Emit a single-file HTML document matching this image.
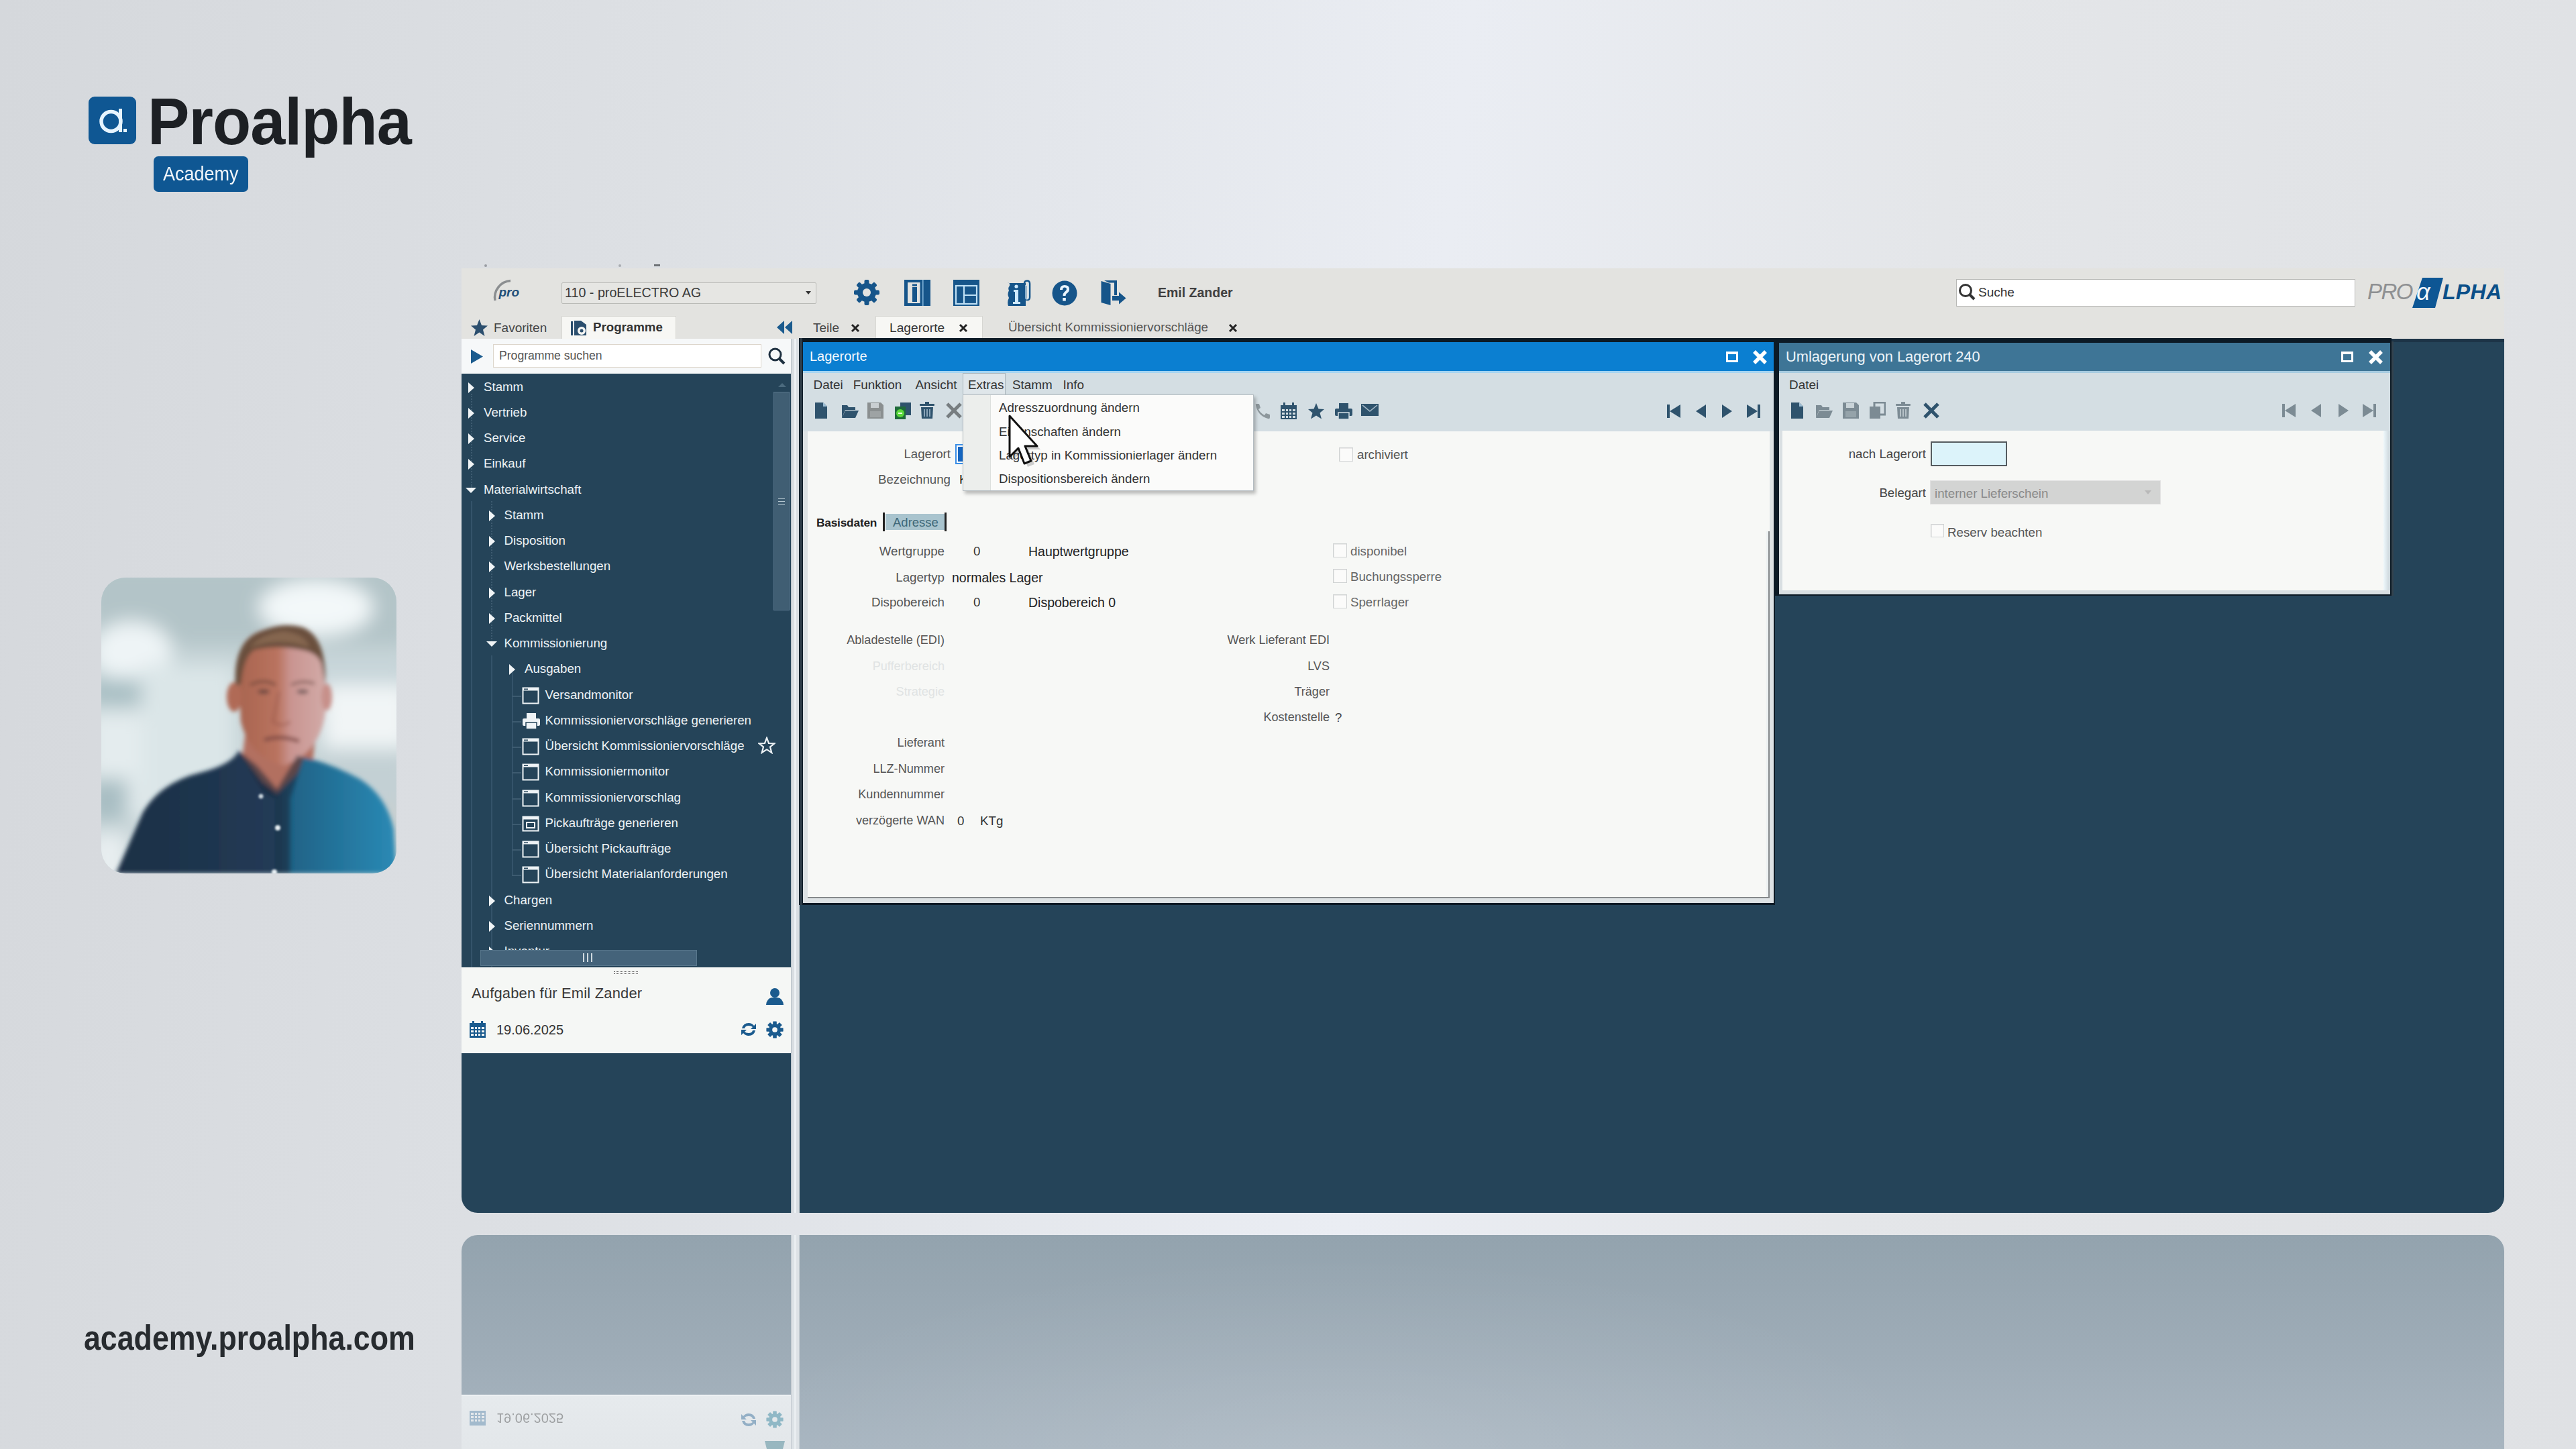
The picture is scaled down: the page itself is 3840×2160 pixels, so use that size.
<!DOCTYPE html>
<html><head><meta charset="utf-8">
<style>
*{box-sizing:border-box;margin:0;padding:0}
html,body{width:3840px;height:2160px;overflow:hidden}
body{position:relative;font-family:"Liberation Sans",sans-serif;
background:linear-gradient(96deg,#d5d8dc 0%,#dde0e4 25%,#eaedf3 54%,#e4e6e9 72%,#dfe1e4 100%);}
.a{position:absolute}
.t{position:absolute;white-space:nowrap;line-height:1}
.app{font-size:19px;color:#2b2b2b}
</style></head><body>

<!-- Brand logo -->
<div class="a" style="left:132px;top:144px;width:71px;height:71px;background:#0f5793;border-radius:9px"></div>
<svg class="a" style="left:132px;top:144px" width="71" height="71" viewBox="0 0 71 71">
<circle cx="33.5" cy="37" r="14.5" fill="none" stroke="#e6f4ff" stroke-width="5.5"/>
<rect x="45" y="18" width="5" height="35" fill="#e6f4ff"/>
<rect x="52" y="48" width="5" height="5" fill="#e6f4ff"/>
</svg>
<div class="t" style="left:220px;top:132px;font-size:98px;font-weight:bold;color:#1d2024;transform:scaleX(0.955);transform-origin:0 0;letter-spacing:-1px">Proalpha</div>
<div class="a" style="left:229px;top:233px;width:141px;height:53px;background:#0f5793;border-radius:7px"></div>
<div class="t" style="left:243px;top:244px;font-size:30px;color:#f2f6fa;transform:scaleX(0.9);transform-origin:0 0">Academy</div>

<!-- Presenter video -->
<svg class="a" style="left:151px;top:861px" width="440" height="441" viewBox="0 0 440 441">
<defs>
<clipPath id="vc"><rect x="0" y="0" width="440" height="441" rx="36" ry="36"/></clipPath>
<filter id="bl1" x="-30%" y="-30%" width="160%" height="160%"><feGaussianBlur stdDeviation="14"/></filter>
<filter id="bl2" x="-10%" y="-10%" width="120%" height="120%"><feGaussianBlur stdDeviation="3"/></filter>
<filter id="bl3" x="-10%" y="-10%" width="120%" height="120%"><feGaussianBlur stdDeviation="1.5"/></filter>
<linearGradient id="skin" x1="0" x2="1" y1="0" y2="0"><stop offset="0" stop-color="#a8644f"/><stop offset="0.45" stop-color="#b9735f"/><stop offset="0.6" stop-color="#c99490"/><stop offset="1" stop-color="#d2aba8"/></linearGradient>
<linearGradient id="shirt" x1="0" x2="1" y1="0" y2="0"><stop offset="0" stop-color="#1d2f45"/><stop offset="0.55" stop-color="#213a55"/><stop offset="0.62" stop-color="#1f6286"/><stop offset="1" stop-color="#2a8ab5"/></linearGradient>
</defs>
<g clip-path="url(#vc)">
<rect x="0" y="0" width="440" height="441" fill="#c5d3d6"/>
<g filter="url(#bl1)">
<rect x="-20" y="-20" width="480" height="120" fill="#b3c4c8"/>
<ellipse cx="320" cy="45" rx="85" ry="42" fill="#f3f8f9"/>
<ellipse cx="45" cy="110" rx="60" ry="45" fill="#eef4f6"/>
<rect x="-20" y="150" width="90" height="40" fill="#a9bfc4"/>
<rect x="60" y="130" width="140" height="230" fill="#dbe6e8"/>
<rect x="-20" y="200" width="80" height="160" fill="#e4ecee"/>
<rect x="-20" y="300" width="60" height="60" fill="#a8bec3"/>
<rect x="300" y="120" width="160" height="90" fill="#c8d6da"/>
<rect x="330" y="160" width="130" height="95" fill="#f1f5f6"/>
<rect x="330" y="265" width="130" height="80" fill="#c3d0d4"/>
<rect x="360" y="340" width="100" height="80" fill="#c9d0d0"/>
<rect x="-20" y="380" width="60" height="80" fill="#e8eef0"/>
</g>
<g filter="url(#bl2)">
<!-- neck -->
<path d="M215 230 L320 230 L315 275 L262 330 L210 270 Z" fill="#b27060"/>
<!-- face -->
<path d="M204 125 Q208 78 265 74 Q325 76 332 125 L334 200 Q326 262 272 280 Q222 270 208 215 Z" fill="url(#skin)"/>
<!-- ears -->
<ellipse cx="198" cy="178" rx="11" ry="22" fill="#b06a56"/>
<ellipse cx="336" cy="178" rx="8" ry="20" fill="#c7908a"/>
<!-- shirt -->
<path d="M22 441 L62 350 Q88 305 150 290 Q195 278 205 258 L240 305 L262 322 L292 292 L302 268 Q340 276 385 300 Q425 325 436 375 L440 441 Z" fill="url(#shirt)"/>
<path d="M205 258 L240 318 L258 330 L258 441 L282 441 L282 330 L302 268 L292 265 L262 315 L232 280 Z" fill="#172638" opacity="0.55"/>
<!-- hair -->
<path d="M200 160 Q196 95 238 80 Q270 66 300 74 Q336 88 334 160 L328 128 Q322 112 300 108 Q262 100 228 108 Q212 118 208 160 Z" fill="#6b4f3d"/>
<path d="M222 104 Q265 88 310 104 Q305 84 272 80 Q238 84 222 104 Z" fill="#85664f"/>
<!-- brows/eyes -->
<path d="M222 160 Q242 150 260 160" stroke="#7a4d40" stroke-width="4" fill="none"/>
<path d="M283 160 Q300 152 318 158" stroke="#8a6560" stroke-width="4" fill="none"/>
<ellipse cx="242" cy="170" rx="9" ry="3.5" fill="#6d4a42"/>
<ellipse cx="300" cy="170" rx="9" ry="3.5" fill="#7a6060"/>
<!-- nose/mouth -->
<path d="M265 170 L256 215 Q268 224 282 215" stroke="#94564a" stroke-width="3" fill="none" opacity="0.7"/>
<path d="M243 242 Q268 234 295 244" stroke="#7e4a44" stroke-width="5" fill="none"/>
</g>
<g filter="url(#bl3)">
<circle cx="263" cy="373" r="4" fill="#e8f0f4"/>
<circle cx="258" cy="439" r="4" fill="#e8f0f4"/>
<circle cx="238" cy="326" r="3.5" fill="#c9d5dc"/>
</g>
</g>
</svg>


<!-- URL -->
<div class="t" style="left:125px;top:1968px;font-size:52px;font-weight:bold;color:#272b2f;transform:scaleX(0.86);transform-origin:0 0">academy.proalpha.com</div>

<!-- APP -->
<div class="a" id="app" style="left:688px;top:400px;width:3045px;height:1408px;background:#254459;border-radius:0 0 24px 24px;overflow:hidden"></div>
<div class="app">
<!-- top bar -->
<div class="a" style="left:688px;top:400px;width:3045px;height:105px;background:#e3e3e0"></div>
<div class="a" style="left:722px;top:394px;width:4px;height:4px;background:#9a9ea3;border-radius:2px"></div><div class="a" style="left:922px;top:394px;width:4px;height:4px;background:#a9adb2;border-radius:2px"></div><div class="a" style="left:975px;top:394px;width:9px;height:3px;background:#6e7276"></div>
<!-- pro logo -->
<svg class="a" style="left:730px;top:414px" width="56" height="38" viewBox="0 0 56 38">
<path d="M8 34 A25 25 0 0 1 31 4.5" fill="none" stroke="#8b8e90" stroke-width="3.5"/>
<text x="13.5" y="28" font-family="Liberation Sans" font-style="italic" font-weight="bold" font-size="19" fill="#22507a">pro</text>
</svg>
<!-- company dropdown -->
<div class="a" style="left:837px;top:421px;width:380px;height:32px;border:1px solid #b9bab6;background:#e6e6e3;border-radius:2px"></div>
<div class="t" style="left:842px;top:427px;font-size:19.7px;color:#3a3a3a">110 - proELECTRO AG</div>
<svg class="a" style="left:1200px;top:432px" width="10" height="8"><path d="M1 2 L9 2 L5 7 Z" fill="#333"/></svg>
<!-- top icons -->
<svg class="a" style="left:1272px;top:416px" width="40" height="40" viewBox="0 0 40 40"><g fill="#16558a"><circle cx="20" cy="20" r="14"/><rect x="16.5" y="1" width="7" height="9" rx="2" transform="rotate(0 20 20)"/><rect x="16.5" y="1" width="7" height="9" rx="2" transform="rotate(45 20 20)"/><rect x="16.5" y="1" width="7" height="9" rx="2" transform="rotate(90 20 20)"/><rect x="16.5" y="1" width="7" height="9" rx="2" transform="rotate(135 20 20)"/><rect x="16.5" y="1" width="7" height="9" rx="2" transform="rotate(180 20 20)"/><rect x="16.5" y="1" width="7" height="9" rx="2" transform="rotate(225 20 20)"/><rect x="16.5" y="1" width="7" height="9" rx="2" transform="rotate(270 20 20)"/><rect x="16.5" y="1" width="7" height="9" rx="2" transform="rotate(315 20 20)"/></g><circle cx="20" cy="20" r="6" fill="#e3e3e0"/></svg>
<svg class="a" style="left:1348px;top:417px" width="39" height="39" viewBox="0 0 39 39">
<rect x="0" y="0" width="39" height="39" fill="#16558a"/><rect x="5" y="4" width="18.5" height="31" fill="#e3e3e0"/><rect x="12" y="11" width="7" height="22" fill="#16558a"/><rect x="12" y="6.5" width="7" height="3" fill="#16558a"/><rect x="27" y="0" width="1.6" height="39" fill="#7fb2d8"/></svg>
<svg class="a" style="left:1421px;top:417px" width="39" height="39" viewBox="0 0 39 39">
<rect x="0" y="0" width="39" height="39" fill="#16558a"/><g fill="none" stroke="#bfe0f5" stroke-width="2.2"><rect x="4" y="9" width="31" height="27"/><path d="M16 9 L16 36 M16 23 L35 23"/></g></svg>
<svg class="a" style="left:1500px;top:417px" width="37" height="40" viewBox="0 0 37 40">
<path d="M2 5 Q6 4 5 9 Q2 12 4 16 Q1 22 4 27 Q1 33 3 39 L29 39 L29 5 Z" fill="#16558a"/><circle cx="15" cy="10" r="2.6" fill="#cfeaff"/><path d="M11 15 L18 15 L18 33 L21 33 L21 36 L10 36 L10 33 L13 33 L13 18 L11 18 Z" fill="#cfeaff"/>
<path d="M27 29 L27 6 Q27 1.5 31 1.5 Q35 1.5 35 6 L35 26 Q35 30 31.5 30 Q29 30 29 27 L29 9" fill="none" stroke="#16558a" stroke-width="2.6"/><path d="M29 8 L29 27 Q29 29 31 29 Q33 29 33 26 L33 6 Q33 3.5 31 3.5" fill="none" stroke="#d6ecfb" stroke-width="1.2"/></svg>
<svg class="a" style="left:1568px;top:418px" width="38" height="38" viewBox="0 0 38 38">
<circle cx="19" cy="19" r="18.5" fill="#16558a"/><path d="M12 14 Q12 7 19 7 Q26 7 26 13 Q26 17 22 19.5 Q20.5 20.5 20.5 23 L16.5 23 Q16.5 19 19 17 Q22 15 22 13 Q22 10.5 19 10.5 Q16 10.5 16 14 Z" fill="#eaf6ff"/><rect x="16.2" y="26" width="4.6" height="4.6" fill="#eaf6ff"/></svg>
<svg class="a" style="left:1640px;top:416px" width="40" height="40" viewBox="0 0 40 40">
<path d="M1.5 3 L15.5 7 L15.5 39 L1.5 35 Z" fill="#16558a"/><path d="M6 2 L25 2 L25 24 L21 24 L21 5.5 L13 5.5 Z" fill="#16558a"/>
<path d="M18 25 L28 25 L28 19.5 L38.5 28.5 L28 37.5 L28 32 L18 32 Z" fill="#16558a"/></svg>
<div class="t" style="left:1726px;top:427px;font-size:19.5px;font-weight:bold;color:#404040">Emil Zander</div>
<!-- search right -->
<div class="a" style="left:2916px;top:416px;width:595px;height:41px;background:#fff;border:1px solid #b8b9b6"></div>
<svg class="a" style="left:2918px;top:421px" width="30" height="30" viewBox="0 0 30 30"><circle cx="12" cy="12" r="8.5" fill="none" stroke="#333" stroke-width="3"/><path d="M18 18 L25 25" stroke="#333" stroke-width="4"/></svg>
<div class="t" style="left:2949px;top:426px;font-size:19px;color:#333">Suche</div>
<!-- PROALPHA logo -->
<svg class="a" style="left:3525px;top:410px" width="210" height="52" viewBox="0 0 210 52">
<text x="4" y="36" font-family="Liberation Sans" font-style="italic" font-size="33" fill="#8e9092" letter-spacing="-1.5">PRO</text>
<polygon points="86,4 117,4 105,49 71,49" fill="#0d5694"/>
<text x="77" y="37" font-family="Liberation Sans" font-style="italic" font-size="36" fill="#f4f8fb">α</text>
<text x="116" y="36" font-family="Liberation Sans" font-style="italic" font-weight="bold" font-size="32" fill="#0b4f88" letter-spacing="0.3">LPHA</text>
</svg>
<!-- tab row -->
<svg class="a" style="left:701px;top:475px" width="27" height="27" viewBox="0 0 27 27"><path d="M13.5 1 L17 10 L26 10.5 L19 16.5 L21.5 26 L13.5 20.5 L5.5 26 L8 16.5 L1 10.5 L10 10 Z" fill="#2c4f6e"/></svg>
<div class="t" style="left:736px;top:479px;font-size:19px;color:#444">Favoriten</div>
<div class="a" style="left:837px;top:471px;width:171px;height:38px;background:#f7f7f4;border:1px solid #d6d6d2;border-bottom:none"></div>
<svg class="a" style="left:850px;top:476px" width="28" height="26" viewBox="0 0 28 26"><rect x="1" y="3" width="3" height="21" fill="#2c4f6e"/><path d="M6 2 L16 2 L24 8 L24 24 L6 24 Z" fill="#2c4f6e"/><circle cx="17" cy="17" r="6" fill="#f7f7f4"/><circle cx="17" cy="17" r="2.5" fill="#2c4f6e"/></svg>
<div class="t" style="left:884px;top:479px;font-size:18.7px;font-weight:bold;color:#333">Programme</div>
<svg class="a" style="left:1157px;top:477px" width="25" height="22" viewBox="0 0 25 22"><path d="M12 1 L1 11 L12 21 Z M24 1 L13 11 L24 21 Z" fill="#1b5b8e"/></svg>
<div class="t" style="left:1212px;top:479px;font-size:19px;color:#444">Teile</div>
<svg class="a" style="left:1268px;top:482px" width="14" height="14" viewBox="0 0 14 14"><path d="M2 2 L12 12 M12 2 L2 12" stroke="#222" stroke-width="3"/></svg>
<div class="a" style="left:1305px;top:471px;width:160px;height:38px;background:#f7f7f4;border:1px solid #d6d6d2;border-bottom:none"></div>
<div class="t" style="left:1326px;top:479px;font-size:19.2px;color:#333">Lagerorte</div>
<svg class="a" style="left:1429px;top:482px" width="14" height="14" viewBox="0 0 14 14"><path d="M2 2 L12 12 M12 2 L2 12" stroke="#222" stroke-width="3"/></svg>
<div class="t" style="left:1503px;top:479px;font-size:18.75px;color:#555">Übersicht Kommissioniervorschläge</div>
<svg class="a" style="left:1831px;top:482px" width="14" height="14" viewBox="0 0 14 14"><path d="M2 2 L12 12 M12 2 L2 12" stroke="#222" stroke-width="3"/></svg>

<!-- left panel search -->
<div class="a" style="left:688px;top:505px;width:491px;height:52px;background:#f6f8f9"></div>
<svg class="a" style="left:701px;top:520px" width="20" height="23" viewBox="0 0 20 23"><path d="M1 1 L19 11.5 L1 22 Z" fill="#1b5b8e"/></svg>
<div class="a" style="left:735px;top:513px;width:400px;height:35px;background:#fff;border:1px solid #ddd6cc"></div>
<div class="t" style="left:744px;top:522px;font-size:17.6px;color:#555">Programme suchen</div>
<svg class="a" style="left:1144px;top:517px" width="28" height="28" viewBox="0 0 28 28"><circle cx="11.5" cy="11.5" r="8.5" fill="none" stroke="#1d2f3f" stroke-width="3"/><path d="M18 18 L25 25" stroke="#1d2f3f" stroke-width="4"/></svg>

<!-- tree -->
<div class="a" style="left:688px;top:557px;width:491px;height:885px;background:#254459;overflow:hidden">
<div class="a" style="left:14px;top:30px;width:1px;height:140px;border-left:2px dotted #3d5b70"></div>
<div class="a" style="left:14px;top:190px;width:1px;height:700px;border-left:2px solid #34536a"></div>
<div class="a" style="left:44px;top:190px;width:1px;height:210px;border-left:2px dotted #3d5b70"></div>
<div class="a" style="left:44px;top:420px;width:1px;height:470px;border-left:2px solid #34536a"></div>
<div class="a" style="left:75px;top:440px;width:1px;height:308px;border-left:2px solid #34536a"></div>
<svg class="a" style="left:8.0px;top:10.6px" width="14" height="20" viewBox="0 0 14 20"><path d="M2 2 L11 10 L2 18 Z" fill="#f0f4f6"/></svg>
<div class="t" style="left:33.0px;top:10.6px;font-size:18.7px;color:#eef3f6">Stamm</div>
<svg class="a" style="left:8.0px;top:48.9px" width="14" height="20" viewBox="0 0 14 20"><path d="M2 2 L11 10 L2 18 Z" fill="#f0f4f6"/></svg>
<div class="t" style="left:33.0px;top:48.9px;font-size:18.7px;color:#eef3f6">Vertrieb</div>
<svg class="a" style="left:8.0px;top:87.1px" width="14" height="20" viewBox="0 0 14 20"><path d="M2 2 L11 10 L2 18 Z" fill="#f0f4f6"/></svg>
<div class="t" style="left:33.0px;top:87.1px;font-size:18.7px;color:#eef3f6">Service</div>
<svg class="a" style="left:8.0px;top:125.4px" width="14" height="20" viewBox="0 0 14 20"><path d="M2 2 L11 10 L2 18 Z" fill="#f0f4f6"/></svg>
<div class="t" style="left:33.0px;top:125.4px;font-size:18.7px;color:#eef3f6">Einkauf</div>
<svg class="a" style="left:4.0px;top:166.6px" width="20" height="14" viewBox="0 0 20 14"><path d="M2 3 L18 3 L10 11 Z" fill="#f0f4f6"/></svg>
<div class="t" style="left:33.0px;top:163.6px;font-size:18.7px;color:#eef3f6">Materialwirtschaft</div>
<svg class="a" style="left:38.5px;top:201.9px" width="14" height="20" viewBox="0 0 14 20"><path d="M2 2 L11 10 L2 18 Z" fill="#f0f4f6"/></svg>
<div class="t" style="left:63.5px;top:201.9px;font-size:18.7px;color:#eef3f6">Stamm</div>
<svg class="a" style="left:38.5px;top:240.1px" width="14" height="20" viewBox="0 0 14 20"><path d="M2 2 L11 10 L2 18 Z" fill="#f0f4f6"/></svg>
<div class="t" style="left:63.5px;top:240.1px;font-size:18.7px;color:#eef3f6">Disposition</div>
<svg class="a" style="left:38.5px;top:278.4px" width="14" height="20" viewBox="0 0 14 20"><path d="M2 2 L11 10 L2 18 Z" fill="#f0f4f6"/></svg>
<div class="t" style="left:63.5px;top:278.4px;font-size:18.7px;color:#eef3f6">Werksbestellungen</div>
<svg class="a" style="left:38.5px;top:316.6px" width="14" height="20" viewBox="0 0 14 20"><path d="M2 2 L11 10 L2 18 Z" fill="#f0f4f6"/></svg>
<div class="t" style="left:63.5px;top:316.6px;font-size:18.7px;color:#eef3f6">Lager</div>
<svg class="a" style="left:38.5px;top:354.9px" width="14" height="20" viewBox="0 0 14 20"><path d="M2 2 L11 10 L2 18 Z" fill="#f0f4f6"/></svg>
<div class="t" style="left:63.5px;top:354.9px;font-size:18.7px;color:#eef3f6">Packmittel</div>
<svg class="a" style="left:34.5px;top:396.1px" width="20" height="14" viewBox="0 0 20 14"><path d="M2 3 L18 3 L10 11 Z" fill="#f0f4f6"/></svg>
<div class="t" style="left:63.5px;top:393.1px;font-size:18.7px;color:#eef3f6">Kommissionierung</div>
<svg class="a" style="left:69.0px;top:431.4px" width="14" height="20" viewBox="0 0 14 20"><path d="M2 2 L11 10 L2 18 Z" fill="#f0f4f6"/></svg>
<div class="t" style="left:94.0px;top:431.4px;font-size:18.7px;color:#eef3f6">Ausgaben</div>
<svg class="a" style="left:90.0px;top:466.6px" width="26" height="26" viewBox="0 0 26 26"><rect x="1.5" y="1.5" width="23" height="23" fill="none" stroke="#eef3f6" stroke-width="2"/><rect x="1.5" y="1.5" width="23" height="4" fill="#eef3f6"/><rect x="3" y="2.5" width="6" height="1.5" fill="#254459"/></svg>
<div class="a" style="left:75px;top:479.6px;width:14px;border-top:2px solid #3d5b70"></div>
<div class="t" style="left:124.5px;top:469.6px;font-size:18.7px;color:#eef3f6">Versandmonitor</div>
<svg class="a" style="left:90.0px;top:504.8px" width="28" height="26" viewBox="0 0 28 26"><rect x="7" y="1" width="14" height="8" fill="#eef3f6"/><rect x="1" y="9" width="26" height="11" rx="2" fill="#eef3f6"/><rect x="6" y="15" width="16" height="10" fill="#eef3f6" stroke="#254459" stroke-width="1.5"/></svg>
<div class="a" style="left:75px;top:517.8px;width:14px;border-top:2px solid #3d5b70"></div>
<div class="t" style="left:124.5px;top:507.8px;font-size:18.7px;color:#eef3f6">Kommissioniervorschläge generieren</div>
<svg class="a" style="left:90.0px;top:543.1px" width="26" height="26" viewBox="0 0 26 26"><rect x="1.5" y="1.5" width="23" height="23" fill="none" stroke="#eef3f6" stroke-width="2"/><rect x="1.5" y="1.5" width="23" height="4" fill="#eef3f6"/><rect x="3" y="2.5" width="6" height="1.5" fill="#254459"/></svg>
<div class="a" style="left:75px;top:556.1px;width:14px;border-top:2px solid #3d5b70"></div>
<div class="t" style="left:124.5px;top:546.1px;font-size:18.7px;color:#eef3f6">Übersicht Kommissioniervorschläge</div>
<svg class="a" style="left:90.0px;top:581.3px" width="26" height="26" viewBox="0 0 26 26"><rect x="1.5" y="1.5" width="23" height="23" fill="none" stroke="#eef3f6" stroke-width="2"/><rect x="1.5" y="1.5" width="23" height="4" fill="#eef3f6"/><rect x="3" y="2.5" width="6" height="1.5" fill="#254459"/></svg>
<div class="a" style="left:75px;top:594.3px;width:14px;border-top:2px solid #3d5b70"></div>
<div class="t" style="left:124.5px;top:584.3px;font-size:18.7px;color:#eef3f6">Kommissioniermonitor</div>
<svg class="a" style="left:90.0px;top:619.6px" width="26" height="26" viewBox="0 0 26 26"><rect x="1.5" y="1.5" width="23" height="23" fill="none" stroke="#eef3f6" stroke-width="2"/><rect x="1.5" y="1.5" width="23" height="4" fill="#eef3f6"/><rect x="3" y="2.5" width="6" height="1.5" fill="#254459"/></svg>
<div class="a" style="left:75px;top:632.6px;width:14px;border-top:2px solid #3d5b70"></div>
<div class="t" style="left:124.5px;top:622.6px;font-size:18.7px;color:#eef3f6">Kommissioniervorschlag</div>
<svg class="a" style="left:90.0px;top:657.8px" width="26" height="26" viewBox="0 0 26 26"><rect x="1.5" y="2.5" width="23" height="21" fill="none" stroke="#eef3f6" stroke-width="2"/><rect x="1.5" y="2.5" width="23" height="4" fill="#eef3f6"/><rect x="7" y="11" width="12" height="8" fill="none" stroke="#eef3f6" stroke-width="2"/></svg>
<div class="a" style="left:75px;top:670.8px;width:14px;border-top:2px solid #3d5b70"></div>
<div class="t" style="left:124.5px;top:660.8px;font-size:18.7px;color:#eef3f6">Pickaufträge generieren</div>
<svg class="a" style="left:90.0px;top:696.1px" width="26" height="26" viewBox="0 0 26 26"><rect x="1.5" y="1.5" width="23" height="23" fill="none" stroke="#eef3f6" stroke-width="2"/><rect x="1.5" y="1.5" width="23" height="4" fill="#eef3f6"/><rect x="3" y="2.5" width="6" height="1.5" fill="#254459"/></svg>
<div class="a" style="left:75px;top:709.1px;width:14px;border-top:2px solid #3d5b70"></div>
<div class="t" style="left:124.5px;top:699.1px;font-size:18.7px;color:#eef3f6">Übersicht Pickaufträge</div>
<svg class="a" style="left:90.0px;top:734.3px" width="26" height="26" viewBox="0 0 26 26"><rect x="1.5" y="1.5" width="23" height="23" fill="none" stroke="#eef3f6" stroke-width="2"/><rect x="1.5" y="1.5" width="23" height="4" fill="#eef3f6"/><rect x="3" y="2.5" width="6" height="1.5" fill="#254459"/></svg>
<div class="a" style="left:75px;top:747.3px;width:14px;border-top:2px solid #3d5b70"></div>
<div class="t" style="left:124.5px;top:737.3px;font-size:18.7px;color:#eef3f6">Übersicht Materialanforderungen</div>
<svg class="a" style="left:38.5px;top:775.6px" width="14" height="20" viewBox="0 0 14 20"><path d="M2 2 L11 10 L2 18 Z" fill="#f0f4f6"/></svg>
<div class="t" style="left:63.5px;top:775.6px;font-size:18.7px;color:#eef3f6">Chargen</div>
<svg class="a" style="left:38.5px;top:813.8px" width="14" height="20" viewBox="0 0 14 20"><path d="M2 2 L11 10 L2 18 Z" fill="#f0f4f6"/></svg>
<div class="t" style="left:63.5px;top:813.8px;font-size:18.7px;color:#eef3f6">Seriennummern</div>
<svg class="a" style="left:38.5px;top:852.1px" width="14" height="20" viewBox="0 0 14 20"><path d="M2 2 L11 10 L2 18 Z" fill="#f0f4f6"/></svg>
<div class="t" style="left:63.5px;top:852.1px;font-size:18.7px;color:#eef3f6">Inventur</div>
<svg class="a" style="left:442px;top:541px" width="26" height="26" viewBox="0 0 26 26"><path d="M13 2 L16 10 L24.5 10.3 L18 15.5 L20.3 24 L13 19.2 L5.7 24 L8 15.5 L1.5 10.3 L10 10 Z" fill="none" stroke="#eef3f6" stroke-width="2.2"/></svg>
<svg class="a" style="left:470px;top:12px" width="16" height="10"><path d="M2 8 L8 2 L14 8 Z" fill="#4b6a7e"/></svg>
<div class="a" style="left:465px;top:27px;width:24px;height:326px;background:#405e73;border:1px solid #56748a"></div>
<div class="a" style="left:472px;top:186px;width:10px;height:10px;border-top:1px solid #b5c6d0;border-bottom:1px solid #b5c6d0"></div><div class="a" style="left:472px;top:190px;width:10px;height:1px;background:#b5c6d0"></div>
<div class="a" style="left:28px;top:859px;width:323px;height:24px;background:#44637a;border:1px solid #58778c"></div>
<div class="a" style="left:181px;top:864px;width:14px;height:13px;border-left:2px solid #cfd9df;border-right:2px solid #cfd9df"></div><div class="a" style="left:187px;top:864px;width:2px;height:13px;background:#cfd9df"></div>
</div>
<!-- tasks -->
<div class="a" style="left:688px;top:1442px;width:491px;height:128px;background:#f5f7f5"></div>
<div class="a" style="left:915px;top:1448px;width:36px;height:4px;border-top:1px dotted #555;border-bottom:1px dotted #555"></div>
<div class="t" style="left:703px;top:1470px;font-size:21.9px;color:#383838;letter-spacing:0.2px">Aufgaben für Emil Zander</div>
<svg class="a" style="left:1141px;top:1472px" width="28" height="27" viewBox="0 0 28 27"><circle cx="14" cy="8" r="7" fill="#1b5b8e"/><path d="M1 26 Q2 16 10 15 L18 15 Q26 16 27 26 Z" fill="#1b5b8e"/></svg>
<svg class="a" style="left:699px;top:1521px" width="26" height="27" viewBox="0 0 26 27"><rect x="1" y="4" width="24" height="22" fill="#1b5b8e"/><g fill="#f5f7f5"><rect x="3" y="10" width="4" height="3"/><rect x="9" y="10" width="3" height="3"/><rect x="14" y="10" width="3" height="3"/><rect x="19" y="10" width="4" height="3"/><rect x="3" y="15" width="4" height="3"/><rect x="9" y="15" width="3" height="3"/><rect x="14" y="15" width="3" height="3"/><rect x="19" y="15" width="4" height="3"/><rect x="3" y="20" width="4" height="3"/><rect x="9" y="20" width="3" height="3"/><rect x="14" y="20" width="3" height="3"/><rect x="19" y="20" width="4" height="3"/></g><rect x="5" y="1" width="3" height="5" fill="#1b5b8e"/><rect x="18" y="1" width="3" height="5" fill="#1b5b8e"/></svg>
<div class="t" style="left:740px;top:1525px;font-size:20px;color:#333">19.06.2025</div>
<svg class="a" style="left:1102px;top:1521px" width="28" height="27" viewBox="0 0 28 27"><path d="M4 12 Q6 4 14 4 Q19 4 22 8 L25 5 L25 13 L17 13 L20 10 Q18 8 14 8 Q9 8 8 12 Z" fill="#1b5b8e"/><path d="M24 15 Q22 23 14 23 Q9 23 6 19 L3 22 L3 14 L11 14 L8 17 Q10 19 14 19 Q19 19 20 15 Z" fill="#1b5b8e"/></svg>
<svg class="a" style="left:1141px;top:1521px" width="28" height="28" viewBox="0 0 40 40"><g fill="#1b5b8e"><circle cx="20" cy="20" r="13"/><rect x="16" y="2" width="8" height="8" rx="1"/><rect x="16" y="30" width="8" height="8" rx="1"/><rect x="2" y="16" width="8" height="8" rx="1"/><rect x="30" y="16" width="8" height="8" rx="1"/><g transform="rotate(45 20 20)"><rect x="16" y="2" width="8" height="8" rx="1"/><rect x="16" y="30" width="8" height="8" rx="1"/><rect x="2" y="16" width="8" height="8" rx="1"/><rect x="30" y="16" width="8" height="8" rx="1"/></g></g><circle cx="20" cy="20" r="5.5" fill="#f5f7f5"/></svg>
<!-- divider -->
<div class="a" style="left:1179px;top:505px;width:13px;height:1303px;background:#d9dee2;border-left:1px solid #b9c2c8;border-right:1px solid #c3cbd0"></div>
<div class="a" style="left:1184px;top:505px;width:3px;height:1303px;background:#edf1f4"></div>
<!-- MDI top line -->
<div class="a" style="left:1192px;top:505px;width:2541px;height:5px;background:#1d3447"></div>
<!-- Lagerorte window -->
<div class="a" style="left:1191px;top:504px;width:1455px;height:845px;background:#0c1a25"></div>
<div class="a" style="left:1192px;top:504px;width:4px;height:845px;background:#2e3d49"></div>
<div class="a" style="left:1197px;top:510px;width:1447px;height:43px;background:#0b7fd1"></div>
<div class="a" style="left:1197px;top:553px;width:1447px;height:3px;background:#a6d5f2"></div>
<div class="a" style="left:1197px;top:556px;width:1447px;height:790px;background:#dde2e4"></div>
<div class="a" style="left:1197px;top:556px;width:1447px;height:87px;background:#d4dee3"></div>
<div class="a" style="left:1204px;top:643px;width:1434px;height:696px;background:#f7f8f6;border-bottom:2.5px solid #85898b"></div>
<div class="a" style="left:2636px;top:792px;width:2px;height:547px;background:#85898b"></div>
<div class="a" style="left:2633px;top:792px;width:3px;height:545px;background:#eef2f3"></div>
<div class="t" style="left:1207px;top:520.5px;font-size:20px;color:#f4f9fd;">Lagerorte</div>
<div class="a" style="left:2573px;top:524px;width:18px;height:16px;border:3px solid #fff;border-top-width:4px"></div>
<svg class="a" style="left:2612.5px;top:521.5px" width="21" height="21" viewBox="0 0 21 21"><path d="M2 2 L19 19 M19 2 L2 19" stroke="#fff" stroke-width="5.5"/></svg>
<div class="t" style="left:1212.6px;top:564.5px;font-size:18.9px;color:#333;">Datei</div>
<div class="t" style="left:1271.8px;top:564.5px;font-size:18.9px;color:#333;">Funktion</div>
<div class="t" style="left:1364.5px;top:564.5px;font-size:18.9px;color:#333;">Ansicht</div>
<div class="t" style="left:1443px;top:564.5px;font-size:18.9px;color:#333;">Extras</div>
<div class="t" style="left:1509px;top:564.5px;font-size:18.9px;color:#333;">Stamm</div>
<div class="t" style="left:1584.6px;top:564.5px;font-size:18.9px;color:#333;">Info</div>
<svg class="a" style="left:1211px;top:599px" width="26" height="26" viewBox="0 0 26 26"><path d="M4 1 L16 1 L22 7 L22 25 L4 25 Z" fill="#2f536d"/><path d="M16 1 L16 7 L22 7" fill="#9fbfd6"/></svg>
<svg class="a" style="left:1253px;top:599px" width="28" height="26" viewBox="0 0 28 26"><path d="M2 5 L10 5 L12 8 L22 8 L22 12 L7 12 L2 24 Z" fill="#2f536d"/><path d="M7 13 L27 13 L22 24 L2 24 Z" fill="#2f536d"/></svg>
<svg class="a" style="left:1292px;top:599px" width="26" height="26" viewBox="0 0 26 26"><path d="M1 1 L21 1 L25 5 L25 25 L1 25 Z" fill="#8a8f90"/><rect x="6" y="2" width="12" height="7" fill="#c9cfd2"/><rect x="5" y="14" width="16" height="9" fill="#9ea3a4"/></svg>
<svg class="a" style="left:1332px;top:599px" width="28" height="26" viewBox="0 0 28 26"><rect x="10" y="1" width="16" height="19" fill="#2f536d"/><rect x="2" y="7" width="16" height="19" fill="#1f6b3a"/><circle cx="10" cy="17" r="6" fill="#59d83a"/><path d="M7 17 L13 17" stroke="#e8ffe0" stroke-width="2"/></svg>
<svg class="a" style="left:1370px;top:599px" width="24" height="26" viewBox="0 0 24 26"><rect x="1" y="3" width="22" height="3" rx="1" fill="#2f536d"/><rect x="9" y="0" width="6" height="3" fill="#2f536d"/><path d="M3 8 L21 8 L20 25 L4 25 Z" fill="#2f536d"/><path d="M8 11 L8 22 M12 11 L12 22 M16 11 L16 22" stroke="#a9c0d0" stroke-width="1.5"/></svg>
<svg class="a" style="left:1409px;top:599px" width="26" height="26" viewBox="0 0 26 26"><path d="M3 3 L23 23 M23 3 L3 23" stroke="#777d80" stroke-width="5"/></svg>
<svg class="a" style="left:1869px;top:600px" width="26" height="26" viewBox="0 0 26 26"><path d="M3 4 Q2 2 5 2 L8 2 L10 8 L7 10 Q10 16 16 19 L18 16 L24 18 L24 22 Q24 25 21 24 Q6 20 3 4 Z" fill="#8d979c"/></svg>
<svg class="a" style="left:1908px;top:600px" width="26" height="26" viewBox="0 0 26 26"><rect x="1" y="4" width="24" height="21" fill="#2f536d"/><g fill="#d4dee3"><rect x="3" y="10" width="4" height="3"/><rect x="9" y="10" width="3" height="3"/><rect x="14" y="10" width="3" height="3"/><rect x="19" y="10" width="4" height="3"/><rect x="3" y="15" width="4" height="3"/><rect x="9" y="15" width="3" height="3"/><rect x="14" y="15" width="3" height="3"/><rect x="19" y="15" width="4" height="3"/><rect x="3" y="20" width="4" height="3"/><rect x="9" y="20" width="3" height="3"/><rect x="14" y="20" width="3" height="3"/><rect x="19" y="20" width="4" height="3"/></g><rect x="5" y="0" width="3" height="5" fill="#2f536d"/><rect x="18" y="0" width="3" height="5" fill="#2f536d"/></svg>
<svg class="a" style="left:1949px;top:600px" width="26" height="26" viewBox="0 0 26 26"><path d="M13 1 L16.5 9.5 L25 10 L18.5 15.5 L21 24.5 L13 19.5 L5 24.5 L7.5 15.5 L1 10 L9.5 9.5 Z" fill="#2f536d"/></svg>
<svg class="a" style="left:1989px;top:600px" width="28" height="26" viewBox="0 0 28 26"><rect x="7" y="1" width="14" height="8" fill="#2f536d"/><rect x="1" y="9" width="26" height="11" rx="2" fill="#2f536d"/><rect x="6" y="15" width="16" height="10" fill="#2f536d" stroke="#d4dee3" stroke-width="1.5"/></svg>
<svg class="a" style="left:2028px;top:600px" width="28" height="22" viewBox="0 0 28 22"><rect x="1" y="2" width="26" height="18" fill="#2f536d"/><path d="M3 4 L14 13 L25 4" fill="none" stroke="#a9bccb" stroke-width="1.5"/></svg>
<svg class="a" style="left:2483px;top:600px" width="24" height="26" viewBox="0 0 24 26"><rect x="2" y="3" width="4" height="20" fill="#2f536d"/><path d="M22 3 L6 13 L22 23 Z" fill="#2f536d"/></svg>
<svg class="a" style="left:2524px;top:600px" width="24" height="26" viewBox="0 0 24 26"><path d="M19 3 L4 13 L19 23 Z" fill="#2f536d"/></svg>
<svg class="a" style="left:2562px;top:600px" width="24" height="26" viewBox="0 0 24 26"><path d="M5 3 L20 13 L5 23 Z" fill="#2f536d"/></svg>
<svg class="a" style="left:2602px;top:600px" width="24" height="26" viewBox="0 0 24 26"><path d="M2 3 L18 13 L2 23 Z" fill="#2f536d"/><rect x="18" y="3" width="4" height="20" fill="#2f536d"/></svg>
<div class="t" style="left:1117px;width:300px;text-align:right;top:667.5px;font-size:18.7px;color:#555">Lagerort</div>
<div class="a" style="left:1424px;top:662px;width:40px;height:30px;border:2px solid #3a8ee6;background:#fff"></div><div class="a" style="left:1428px;top:666px;width:8px;height:22px;background:#1565c0"></div>
<div class="t" style="left:1117px;width:300px;text-align:right;top:705.5px;font-size:18.7px;color:#555">Bezeichnung</div>
<div class="t" style="left:1430px;top:705.5px;font-size:18.7px;color:#222;">K</div>
<div class="a" style="left:1996px;top:667px;width:21px;height:21px;background:#fbfbfa;border:1px solid #d0d3d3;box-shadow:inset 1px 1px 0 #e8e8e8"></div>
<div class="t" style="left:2023px;top:668.5px;font-size:18.7px;color:#555;">archiviert</div>
<div class="t" style="left:1217px;top:770.5px;font-size:17.3px;color:#222;font-weight:bold;letter-spacing:-0.2px">Basisdaten</div>
<div class="a" style="left:1316px;top:764px;width:3px;height:28px;background:#222"></div>
<div class="a" style="left:1320px;top:766px;width:88px;height:24px;background:#a9c4ce"></div>
<div class="a" style="left:1408px;top:764px;width:3px;height:28px;background:#222"></div>
<div class="t" style="left:1331px;top:769.5px;font-size:18.5px;color:#3e6878;">Adresse</div>
<div class="t" style="left:1108px;width:300px;text-align:right;top:812.5px;font-size:18.7px;color:#555">Wertgruppe</div>
<div class="t" style="left:1451px;top:812.5px;font-size:18.7px;color:#333;">0</div>
<div class="t" style="left:1533px;top:812.5px;font-size:19.5px;color:#222;">Hauptwertgruppe</div>
<div class="t" style="left:1108px;width:300px;text-align:right;top:851.5px;font-size:18.7px;color:#555">Lagertyp</div>
<div class="t" style="left:1419px;top:851.5px;font-size:19.5px;color:#222;">normales Lager</div>
<div class="t" style="left:1108px;width:300px;text-align:right;top:888.5px;font-size:18.7px;color:#555">Dispobereich</div>
<div class="t" style="left:1451px;top:888.5px;font-size:18.7px;color:#333;">0</div>
<div class="t" style="left:1533px;top:888.5px;font-size:19.5px;color:#222;">Dispobereich 0</div>
<div class="a" style="left:1987px;top:810px;width:21px;height:21px;background:#fbfbfa;border:1px solid #d0d3d3;box-shadow:inset 1px 1px 0 #e8e8e8"></div>
<div class="t" style="left:2013px;top:812.5px;font-size:18.7px;color:#666;">disponibel</div>
<div class="a" style="left:1987px;top:848px;width:21px;height:21px;background:#fbfbfa;border:1px solid #d0d3d3;box-shadow:inset 1px 1px 0 #e8e8e8"></div>
<div class="t" style="left:2013px;top:850.5px;font-size:18.7px;color:#666;">Buchungssperre</div>
<div class="a" style="left:1987px;top:886px;width:21px;height:21px;background:#fbfbfa;border:1px solid #d0d3d3;box-shadow:inset 1px 1px 0 #e8e8e8"></div>
<div class="t" style="left:2013px;top:888.5px;font-size:18.7px;color:#666;">Sperrlager</div>
<div class="t" style="left:1108px;width:300px;text-align:right;top:944.5px;font-size:18.1px;color:#555">Abladestelle (EDI)</div>
<div class="t" style="left:1108px;width:300px;text-align:right;top:983.5px;font-size:18.1px;color:#e0e3e3">Pufferbereich</div>
<div class="t" style="left:1108px;width:300px;text-align:right;top:1021.5px;font-size:18.1px;color:#e0e3e3">Strategie</div>
<div class="t" style="left:1108px;width:300px;text-align:right;top:1097.5px;font-size:18.1px;color:#555">Lieferant</div>
<div class="t" style="left:1108px;width:300px;text-align:right;top:1136.5px;font-size:18.1px;color:#555">LLZ-Nummer</div>
<div class="t" style="left:1108px;width:300px;text-align:right;top:1174.5px;font-size:18.1px;color:#555">Kundennummer</div>
<div class="t" style="left:1108px;width:300px;text-align:right;top:1213.5px;font-size:18.1px;color:#555">verzögerte WAN</div>
<div class="t" style="left:1427px;top:1214.5px;font-size:18.7px;color:#333;">0</div>
<div class="t" style="left:1461px;top:1214.5px;font-size:18.7px;color:#333;">KTg</div>
<div class="t" style="left:1682px;width:300px;text-align:right;top:944.5px;font-size:18.1px;color:#555">Werk Lieferant EDI</div>
<div class="t" style="left:1682px;width:300px;text-align:right;top:983.5px;font-size:18.1px;color:#555">LVS</div>
<div class="t" style="left:1682px;width:300px;text-align:right;top:1021.5px;font-size:18.1px;color:#555">Träger</div>
<div class="t" style="left:1682px;width:300px;text-align:right;top:1059.5px;font-size:18.1px;color:#555">Kostenstelle</div>
<div class="t" style="left:1990px;top:1060.5px;font-size:18.7px;color:#444;">?</div>
<div class="a" style="left:1435px;top:556px;width:64px;height:34px;background:#dfe6ea;border:1px solid #a9b4ba;border-bottom:none"></div>
<div class="t" style="left:1443px;top:564.5px;font-size:18.9px;color:#333;">Extras</div>
<div class="a" style="left:1435px;top:588px;width:434px;height:144px;background:#fbfbfa;border:1px solid #b4bcc1;box-shadow:3px 4px 5px rgba(0,0,0,0.25)"></div>
<div class="a" style="left:1436px;top:589px;width:41px;height:142px;background:#eceeec;border-right:1px solid #dde0de"></div>
<div class="t" style="left:1489px;top:599.1px;font-size:18.7px;color:#333;">Adresszuordnung ändern</div>
<div class="t" style="left:1489px;top:634.5px;font-size:18.7px;color:#333;">Eigenschaften ändern</div>
<div class="t" style="left:1489px;top:669.5px;font-size:18.7px;color:#333;">Lagertyp in Kommissionierlager ändern</div>
<div class="t" style="left:1489px;top:704.5px;font-size:18.7px;color:#333;">Dispositionsbereich ändern</div>
<svg class="a" style="left:1498px;top:617px" width="56" height="84" viewBox="0 0 56 84"><path d="M9 5 L9 66 L22 53 L31 76 L41 72 L32 50 L50 50 Z" fill="rgba(0,0,0,0.18)" transform="translate(3,3)"/><path d="M7 3 L7 64 L20 51 L29 74 L39 70 L30 48 L48 48 Z" fill="#fff" stroke="#111" stroke-width="3" stroke-linejoin="round"/></svg>
<!-- Umlagerung window -->
<div class="a" style="left:2646px;top:504px;width:919px;height:384px;background:#0c1a25"></div>
<div class="a" style="left:3565px;top:509px;width:3px;height:379px;background:#34434e"></div>
<div class="a" style="left:2652px;top:511px;width:911px;height:42px;background:#3e7596"></div>
<div class="a" style="left:2652px;top:553px;width:911px;height:3px;background:#a6cbe0"></div>
<div class="a" style="left:2652px;top:556px;width:911px;height:330px;background:#d9dfe2"></div>
<div class="a" style="left:2652px;top:556px;width:911px;height:86px;background:#d4dee3"></div>
<div class="a" style="left:2657px;top:642px;width:896px;height:238px;background:#f7f8f6"></div>
<div class="a" style="left:3553px;top:642px;width:10px;height:238px;background:linear-gradient(90deg,#eef8fc,#c9d3d8)"></div>
<div class="t" style="left:2662px;top:520.5px;font-size:21.8px;color:#eef5fa;">Umlagerung von Lagerort 240</div>
<div class="a" style="left:3490px;top:524px;width:18px;height:16px;border:3px solid #fff;border-top-width:4px"></div>
<svg class="a" style="left:3530.5px;top:521.5px" width="21" height="21" viewBox="0 0 21 21"><path d="M2 2 L19 19 M19 2 L2 19" stroke="#fff" stroke-width="5.5"/></svg>
<div class="t" style="left:2667px;top:564.5px;font-size:18.9px;color:#333;">Datei</div>
<svg class="a" style="left:2666px;top:599px" width="26" height="26" viewBox="0 0 26 26"><path d="M4 1 L16 1 L22 7 L22 25 L4 25 Z" fill="#2f536d"/><path d="M16 1 L16 7 L22 7" fill="#9fbfd6"/></svg>
<svg class="a" style="left:2705px;top:599px" width="28" height="26" viewBox="0 0 28 26"><path d="M2 5 L10 5 L12 8 L22 8 L22 12 L7 12 L2 24 Z" fill="#7c8b94"/><path d="M7 13 L27 13 L22 24 L2 24 Z" fill="#7c8b94"/></svg>
<svg class="a" style="left:2746px;top:599px" width="26" height="26" viewBox="0 0 26 26"><path d="M1 1 L21 1 L25 5 L25 25 L1 25 Z" fill="#7c8b94"/><rect x="6" y="2" width="12" height="7" fill="#c9d3d8"/><rect x="5" y="14" width="16" height="9" fill="#95a3aa"/></svg>
<svg class="a" style="left:2785px;top:599px" width="26" height="26" viewBox="0 0 26 26"><rect x="9" y="1" width="16" height="18" fill="none" stroke="#7c8b94" stroke-width="3"/><rect x="2" y="7" width="16" height="18" fill="#7c8b94"/></svg>
<svg class="a" style="left:2825px;top:599px" width="24" height="26" viewBox="0 0 24 26"><rect x="1" y="3" width="22" height="3" rx="1" fill="#7c8b94"/><rect x="9" y="0" width="6" height="3" fill="#7c8b94"/><path d="M3 8 L21 8 L20 25 L4 25 Z" fill="#7c8b94"/><path d="M8 11 L8 22 M12 11 L12 22 M16 11 L16 22" stroke="#c9d3d8" stroke-width="1.5"/></svg>
<svg class="a" style="left:2866px;top:599px" width="26" height="26" viewBox="0 0 26 26"><path d="M3 3 L23 23 M23 3 L3 23" stroke="#2f536d" stroke-width="5"/></svg>
<svg class="a" style="left:3400px;top:599px" width="24" height="26" viewBox="0 0 24 26"><rect x="2" y="3" width="4" height="20" fill="#7c8b94"/><path d="M22 3 L6 13 L22 23 Z" fill="#7c8b94"/></svg>
<svg class="a" style="left:3441px;top:599px" width="24" height="26" viewBox="0 0 24 26"><path d="M19 3 L4 13 L19 23 Z" fill="#7c8b94"/></svg>
<svg class="a" style="left:3481px;top:599px" width="24" height="26" viewBox="0 0 24 26"><path d="M5 3 L20 13 L5 23 Z" fill="#7c8b94"/></svg>
<svg class="a" style="left:3520px;top:599px" width="24" height="26" viewBox="0 0 24 26"><path d="M2 3 L18 13 L2 23 Z" fill="#7c8b94"/><rect x="18" y="3" width="4" height="20" fill="#7c8b94"/></svg>
<div class="t" style="left:2571px;width:300px;text-align:right;top:667.5px;font-size:18.7px;color:#444">nach Lagerort</div>
<div class="a" style="left:2878px;top:658px;width:114px;height:37px;background:#dcf3fa;border:2px solid #555c60"></div>
<div class="t" style="left:2571px;width:300px;text-align:right;top:725.5px;font-size:18.7px;color:#444">Belegart</div>
<div class="a" style="left:2877px;top:716px;width:344px;height:36px;background:#d3d4d3;border:1px solid #e2e2e2"></div>
<div class="t" style="left:2884px;top:726.5px;font-size:18.7px;color:#8a8a8a;">interner Lieferschein</div>
<svg class="a" style="left:3196px;top:730px" width="12" height="8"><path d="M1 1 L11 1 L6 7 Z" fill="#b9b9b9"/></svg>
<div class="a" style="left:2878px;top:781px;width:20px;height:20px;background:#fbfbfa;border:1px solid #d0d3d3;box-shadow:inset 1px 1px 0 #e8e8e8"></div>
<div class="t" style="left:2903px;top:784.5px;font-size:18.7px;color:#555;">Reserv beachten</div>
</div>
<!-- Reflection -->
<div class="a" style="left:688px;top:1841px;width:3045px;height:319px;border-radius:24px 24px 0 0;overflow:hidden;background:linear-gradient(180deg,#93a3ae 0%,#9eacb7 55%,#a8b5c0 100%)">
<div class="a" style="left:0;top:0;width:3045px;height:319px;background:radial-gradient(ellipse 900px 300px at 1300px 330px,rgba(255,255,255,0.12),rgba(255,255,255,0))"></div>
<div class="a" style="left:0;top:238px;width:491px;height:81px;background:linear-gradient(180deg,#e6eaed,#e3e7ea);border-top:2px solid #eef1f3"></div>
<div class="a" style="left:491px;top:0;width:13px;height:319px;background:#dde2e6;border-left:1px solid #c3cad0;border-right:1px solid #c9d0d5"></div>
<div class="a" style="left:496px;top:0;width:3px;height:319px;background:#eaeef1"></div>
<svg class="a" style="left:11px;top:261px;opacity:0.32" width="26" height="27" viewBox="0 0 26 27"><g transform="translate(0,27) scale(1,-1)"><rect x="1" y="4" width="24" height="22" fill="#1b5b8e"/><g fill="#e4e8eb"><rect x="3" y="10" width="4" height="3"/><rect x="9" y="10" width="3" height="3"/><rect x="14" y="10" width="3" height="3"/><rect x="19" y="10" width="4" height="3"/><rect x="3" y="15" width="4" height="3"/><rect x="9" y="15" width="3" height="3"/><rect x="14" y="15" width="3" height="3"/><rect x="19" y="15" width="4" height="3"/><rect x="3" y="20" width="4" height="3"/><rect x="9" y="20" width="3" height="3"/><rect x="14" y="20" width="3" height="3"/><rect x="19" y="20" width="4" height="3"/></g></g></svg>
<div class="t" style="left:52px;top:263px;font-size:20px;color:#333;opacity:0.4;transform:scaleY(-1)">19.06.2025</div>
<svg class="a" style="left:414px;top:262px;opacity:0.4" width="28" height="27" viewBox="0 0 28 27"><g transform="translate(0,27) scale(1,-1)"><path d="M4 12 Q6 4 14 4 Q19 4 22 8 L25 5 L25 13 L17 13 L20 10 Q18 8 14 8 Q9 8 8 12 Z" fill="#1b5b8e"/><path d="M24 15 Q22 23 14 23 Q9 23 6 19 L3 22 L3 14 L11 14 L8 17 Q10 19 14 19 Q19 19 20 15 Z" fill="#1b5b8e"/></g></svg>
<svg class="a" style="left:453px;top:261px;opacity:0.45" width="28" height="28" viewBox="0 0 40 40"><g fill="#2a7f9a"><circle cx="20" cy="20" r="13"/><rect x="16" y="2" width="8" height="8" rx="1"/><rect x="16" y="30" width="8" height="8" rx="1"/><rect x="2" y="16" width="8" height="8" rx="1"/><rect x="30" y="16" width="8" height="8" rx="1"/><g transform="rotate(45 20 20)"><rect x="16" y="2" width="8" height="8" rx="1"/><rect x="16" y="30" width="8" height="8" rx="1"/><rect x="2" y="16" width="8" height="8" rx="1"/><rect x="30" y="16" width="8" height="8" rx="1"/></g></g><circle cx="20" cy="20" r="5.5" fill="#e4e8eb"/></svg>
<svg class="a" style="left:452px;top:307px" width="30" height="12" viewBox="0 0 30 12"><path d="M0 0 L30 0 L27 12 L3 12 Z" fill="#7fa7b2" opacity="0.75"/></svg>
</div>

</body></html>
